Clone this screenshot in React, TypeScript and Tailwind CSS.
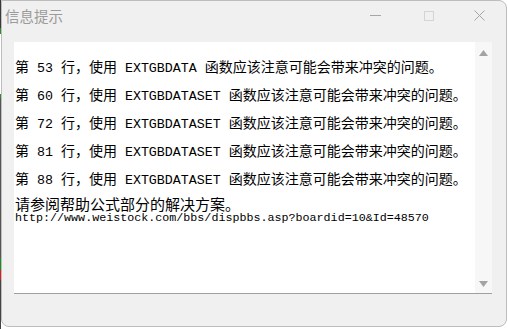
import React from 'react';

const ROWS = [
  { n: '53', fn: 'EXTGBDATA' },
  { n: '60', fn: 'EXTGBDATASET' },
  { n: '72', fn: 'EXTGBDATASET' },
  { n: '81', fn: 'EXTGBDATASET' },
  { n: '88', fn: 'EXTGBDATASET' },
];

const cjk = "font-['Noto_Sans_CJK_SC',sans-serif]";
const mono = "font-['Liberation_Mono',monospace] text-[13.3px]";

function WarnLine({ n, fn }: { n: string; fn: string }) {
  return (
    <p className="h-[28px] leading-[28px] whitespace-pre text-[14px] text-black">
      <span className={cjk}>第</span>
      <span className={mono}> {n} </span>
      <span className={cjk}>行，使用</span>
      <span className={mono}> {fn} </span>
      <span className={cjk}>函数应该注意可能会带来冲突的问题。</span>
    </p>
  );
}

export default function App() {
  return (
    <div className="w-[508px] h-[329px] bg-white flex overflow-hidden">
      {/* sliver of the app behind the dialog */}
      <div className="w-[1px] h-full flex flex-col">
        <div className="h-[28px] bg-[#3a3a3a]" />
        <div className="h-[6px] bg-[#2e8b2e]" />
        <div className="h-[60px] bg-white" />
        <div className="h-[4px] bg-[#2e8b2e]" />
        <div className="h-[160px] bg-[#555]" />
        <div className="h-[12px] bg-[#1f8a1f]" />
        <div className="h-[10px] bg-[#d42020]" />
        <div className="flex-1 bg-[#444]" />
      </div>

      {/* dialog */}
      <div className="w-[506px] h-[327px] bg-[#f0f0f0] border border-[#bdbdbd] rounded-[8px] rounded-tl-none flex flex-col">
        {/* title bar */}
        <div className="h-[29px] flex items-center">
          <span className={`${cjk} text-[14.5px] text-[#9b9b9b] pl-[3px]`}>信息提示</span>
          <div className="ml-auto flex items-center h-full">
            <div className="w-[54px] h-full flex items-center justify-center">
              <div className="w-[11px] h-[1px] bg-[#a6a6a6]" />
            </div>
            <div className="w-[54px] h-full flex items-center justify-center">
              <div className="w-[10px] h-[10px] border border-[#d4d4d4]" />
            </div>
            <div className="w-[50px] h-full flex items-center justify-center pr-[4px]">
              <svg width="11" height="11" viewBox="0 0 11 11">
                <path d="M0.5 0.5 L10.5 10.5 M10.5 0.5 L0.5 10.5" stroke="#a6a6a6" strokeWidth="1" fill="none" />
              </svg>
            </div>
          </div>
        </div>

        {/* text box */}
        <div className="mt-[12px] ml-[12px] w-[478px] h-[252px] bg-white border-b border-[#a0a0a0] flex">
          <div className="flex-1 pl-[1px] pt-[10px]">
            {ROWS.map((r) => (
              <WarnLine key={r.n} n={r.n} fn={r.fn} />
            ))}
            <p className={`${cjk} mt-[3px] text-[15px] leading-[17px] text-black`}>请参阅帮助公式部分的解决方案。</p>
            <p className="font-['Liberation_Mono',monospace] text-[11.7px] leading-[13px] text-black">
              http://www.weistock.com/bbs/dispbbs.asp?boardid=10&amp;Id=48570
            </p>
          </div>
          <div className="w-[17px] bg-[#f7f7f7] flex flex-col items-center justify-between pt-[8px] pb-[6px]">
            <svg width="9" height="6" viewBox="0 0 9 6">
              <path d="M4.5 0 L9 6 L0 6 Z" fill="#a3a3a3" />
            </svg>
            <svg width="9" height="6" viewBox="0 0 9 6">
              <path d="M0 0 L9 0 L4.5 6 Z" fill="#a3a3a3" />
            </svg>
          </div>
        </div>
      </div>
    </div>
  );
}
